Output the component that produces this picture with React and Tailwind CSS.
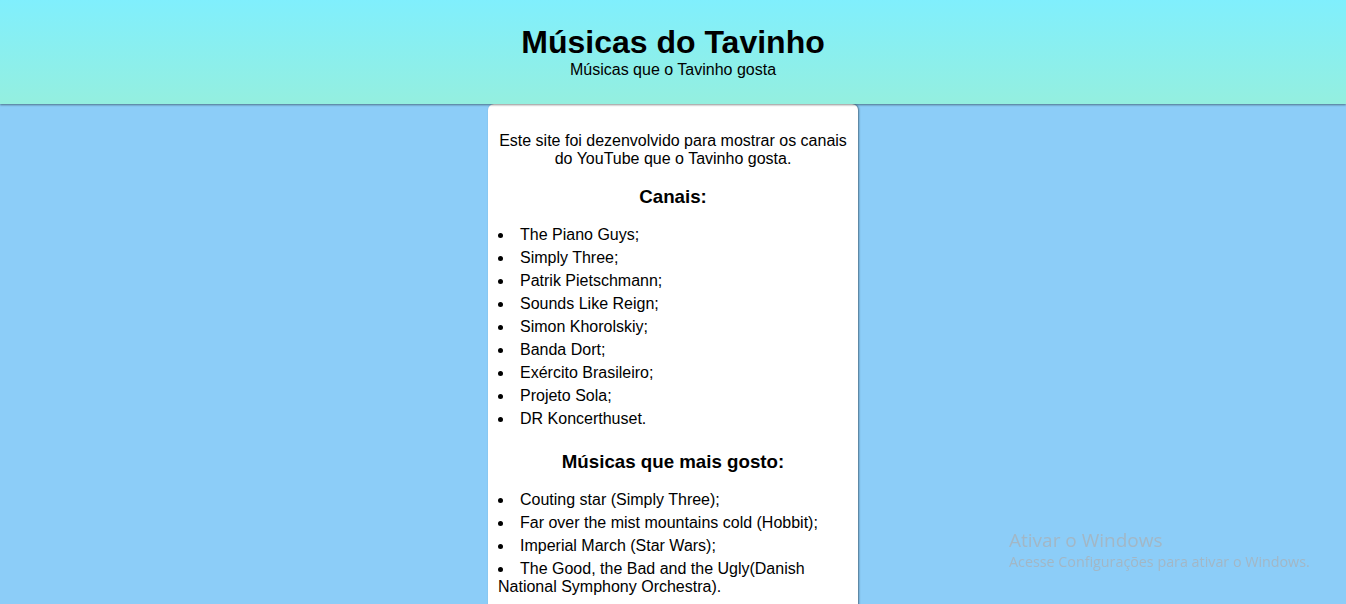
import React from 'react';

const canais = [
  'The Piano Guys;',
  'Simply Three;',
  'Patrik Pietschmann;',
  'Sounds Like Reign;',
  'Simon Khorolskiy;',
  'Banda Dort;',
  'Exército Brasileiro;',
  'Projeto Sola;',
  'DR Koncerthuset.',
];

const musicas = [
  'Couting star (Simply Three);',
  'Far over the mist mountains cold (Hobbit);',
  'Imperial March (Star Wars);',
  'The Good, the Bad and the Ugly(Danish National Symphony Orchestra).',
];

export default function App() {
  return (
    <div className="min-h-screen bg-[#8ccdf8] font-['Liberation_Sans',Arial,sans-serif] text-black">
      {/* Header */}
      <header className="h-[104px] bg-gradient-to-b from-[#80effd] to-[#94efdf] text-center pt-[24px] shadow-[0_1px_2px_rgba(0,0,0,0.45)] relative z-10">
        <h1 className="text-[32px] font-bold leading-[36px]">Músicas do Tavinho</h1>
        <p className="text-[16px] leading-[18px] mt-[1px]">Músicas que o Tavinho gosta</p>
      </header>

      {/* Card */}
      <main className="w-[370px] mx-auto bg-white rounded-t-[6px] px-[10px] pt-[10px] pb-[20px] shadow-[1px_0_2px_rgba(0,0,0,0.45)]">
        <p className="text-center text-[16px] leading-[18px] mt-[18px]">
          Este site foi dezenvolvido para mostrar os canais do YouTube que o Tavinho gosta.
        </p>

        <h3 className="text-center font-bold text-[18.72px] leading-[22px] mt-[18px]">Canais:</h3>
        <ul className="list-disc list-inside mt-[18px]">
          {canais.map((c) => (
            <li key={c} className="text-[16px] leading-[18px] mb-[5px]">{c}</li>
          ))}
        </ul>

        <h3 className="text-center font-bold text-[18.72px] leading-[22px] mt-[23px]">Músicas que mais gosto:</h3>
        <ul className="list-disc list-inside mt-[18px]">
          {musicas.map((m) => (
            <li key={m} className="text-[16px] leading-[18px] mb-[5px]">{m}</li>
          ))}
        </ul>
      </main>

      {/* Windows activation watermark */}
      <div className="fixed left-[1009px] top-[528px] text-[#a2b7c6] font-['Open_Sans',sans-serif] pointer-events-none">
        <div className="text-[19px] leading-[24px]">Ativar o Windows</div>
        <div className="text-[14.3px] leading-[20px]">Acesse Configurações para ativar o Windows.</div>
      </div>
    </div>
  );
}
